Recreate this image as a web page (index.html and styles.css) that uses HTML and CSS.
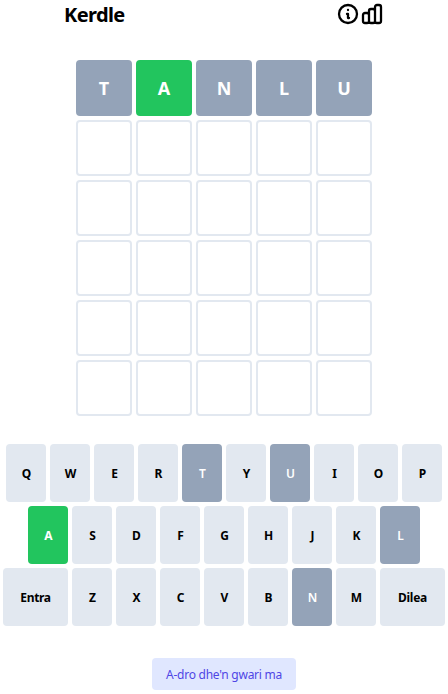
FILE: index.html
```html
<!DOCTYPE html>
<html lang="gd">
<head>
<meta charset="utf-8">
<title>Kerdle</title>
<link rel="stylesheet" href="styles.css">
</head>
<body>
<div class="app">
  <header class="header">
    <h1 class="title">Kerdle</h1>
    <div class="icons">
      <svg class="icon" viewBox="0 0 24 24" fill="none" stroke="currentColor" stroke-width="2.3" stroke-linecap="round" stroke-linejoin="round"><path d="M13 16h-1v-4h-1m1-4h.01M21 12a9 9 0 11-18 0 9 9 0 0118 0z"/></svg>
      <svg class="icon" viewBox="0 0 24 24" fill="none" stroke="currentColor" stroke-width="2.3" stroke-linecap="round" stroke-linejoin="round"><path d="M9 19v-6a2 2 0 00-2-2H5a2 2 0 00-2 2v6a2 2 0 002 2h2a2 2 0 002-2zm0 0V9a2 2 0 012-2h2a2 2 0 012 2v10m-6 0a2 2 0 002 2h2a2 2 0 002-2m0 0V5a2 2 0 012-2h2a2 2 0 012 2v14a2 2 0 01-2 2h-2a2 2 0 01-2-2z"/></svg>
    </div>
  </header>
  <main class="grid">
    <div class="row"><div class="tile absent">T</div><div class="tile correct">A</div><div class="tile absent">N</div><div class="tile absent">L</div><div class="tile absent">U</div></div>
    <div class="row"><div class="tile"></div><div class="tile"></div><div class="tile"></div><div class="tile"></div><div class="tile"></div></div>
    <div class="row"><div class="tile"></div><div class="tile"></div><div class="tile"></div><div class="tile"></div><div class="tile"></div></div>
    <div class="row"><div class="tile"></div><div class="tile"></div><div class="tile"></div><div class="tile"></div><div class="tile"></div></div>
    <div class="row"><div class="tile"></div><div class="tile"></div><div class="tile"></div><div class="tile"></div><div class="tile"></div></div>
    <div class="row"><div class="tile"></div><div class="tile"></div><div class="tile"></div><div class="tile"></div><div class="tile"></div></div>
  </main>
  <section class="keyboard">
    <div class="keys">
      <button class="key">Q</button><button class="key">W</button><button class="key">E</button><button class="key">R</button><button class="key key-absent">T</button><button class="key">Y</button><button class="key key-absent">U</button><button class="key">I</button><button class="key">O</button><button class="key">P</button>
    </div>
    <div class="keys">
      <button class="key key-correct">A</button><button class="key">S</button><button class="key">D</button><button class="key">F</button><button class="key">G</button><button class="key">H</button><button class="key">J</button><button class="key">K</button><button class="key key-absent">L</button>
    </div>
    <div class="keys">
      <button class="key key-wide">Entra</button><button class="key">Z</button><button class="key">X</button><button class="key">C</button><button class="key">V</button><button class="key">B</button><button class="key key-absent">N</button><button class="key">M</button><button class="key key-wide">Dilea</button>
    </div>
  </section>
  <div class="footer"><button class="change">A-dro dhe'n gwari ma</button></div>
</div>
</body>
</html>
```
FILE: styles.css
```css
* { box-sizing: border-box; }
html, body { margin: 0; padding: 0; background: #fff; }
body { font-family: "Noto Sans", "Open Sans", sans-serif; color: #000; }
.app { width: 448px; height: 694px; overflow: hidden; }
.header { width: 320px; height: 30px; margin: 0 auto; display: flex; justify-content: space-between; align-items: center; }
.title { margin: 0; font-size: 20px; line-height: 30px; font-weight: 700; letter-spacing: -0.6px; }
.icons { display: flex; margin-bottom: 2px; }
.icon { width: 24px; height: 24px; display: block; }
.grid { margin-top: 30px; display: flex; flex-direction: column; gap: 4px; align-items: center; }
.row { display: flex; gap: 4px; }
.tile { width: 56px; height: 56px; border: 2px solid #e2e8f0; border-radius: 4px; display: flex; align-items: center; justify-content: center; font-size: 18px; font-weight: 700; color: #fff; }
.tile.absent { background: #94a3b8; border-color: #94a3b8; }
.tile.correct { background: #22c55e; border-color: #22c55e; }
.keyboard { margin-top: 28px; display: flex; flex-direction: column; gap: 4px; align-items: center; }
.keys { display: flex; gap: 4px; }
.key { width: 40px; height: 58px; padding: 0 0 0 1px; border: 0; border-radius: 4px; background: #e2e8f0; color: #000; font-family: inherit; font-size: 12px; font-weight: 700; display: flex; align-items: center; justify-content: center; }
.key-wide { width: 65px; padding: 0; letter-spacing: -0.3px; }
.key-absent { background: #94a3b8; color: #fff; font-weight: 600; }
.key-correct { background: #22c55e; color: #fff; }
.footer { margin-top: 32px; display: flex; justify-content: center; }
.change { width: 144px; height: 32px; padding: 0; border: 0; border-radius: 4px; background: #e0e7ff; color: #4f46e5; font-family: inherit; font-size: 12px; font-weight: 400; letter-spacing: -0.25px; }
```
